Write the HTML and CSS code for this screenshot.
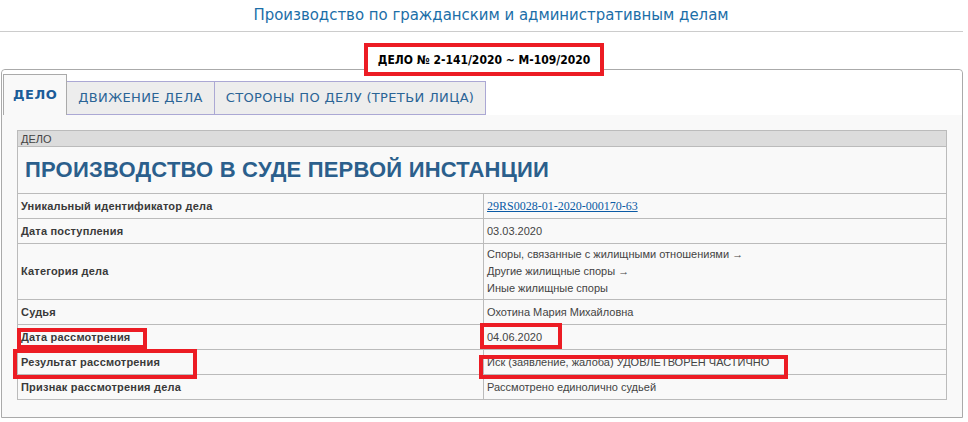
FILE: index.html
```html
<!DOCTYPE html>
<html>
<head>
    <meta charset="utf-8">
    <title>Дело № 2-141/2020</title>
    <link rel="stylesheet" href="styles.css">
</head>
<body>
    <h1 class="page-title">Производство по гражданским и административным делам</h1>
    <hr class="divider">

    <div class="case-number">
        <span class="case-number-box">ДЕЛО № 2-141/2020 ~ М-109/2020</span>
    </div>

    <div class="tabs-panel">
        <ul class="tabs">
            <li class="tab active">ДЕЛО</li>
            <li class="tab">ДВИЖЕНИЕ ДЕЛА</li>
            <li class="tab">СТОРОНЫ ПО ДЕЛУ (ТРЕТЬИ ЛИЦА)</li>
        </ul>

        <div class="tab-body">
            <table class="case-table">
                <tr class="section-row">
                    <td colspan="2">ДЕЛО</td>
                </tr>
                <tr class="heading-row">
                    <td colspan="2">ПРОИЗВОДСТВО В СУДЕ ПЕРВОЙ ИНСТАНЦИИ</td>
                </tr>
                <tr>
                    <td class="label">Уникальный идентификатор дела</td>
                    <td class="value"><a href="#" class="uid-link">29RS0028-01-2020-000170-63</a></td>
                </tr>
                <tr>
                    <td class="label">Дата поступления</td>
                    <td class="value">03.03.2020</td>
                </tr>
                <tr class="tall-row">
                    <td class="label">Категория дела</td>
                    <td class="value">
                        Споры, связанные с жилищными отношениями →<br>
                        Другие жилищные споры →<br>
                        Иные жилищные споры
                    </td>
                </tr>
                <tr>
                    <td class="label">Судья</td>
                    <td class="value">Охотина Мария Михайловна</td>
                </tr>
                <tr>
                    <td class="label"><span class="mark mark-date-label">Дата рассмотрения</span></td>
                    <td class="value"><span class="mark mark-date-value">04.06.2020</span></td>
                </tr>
                <tr>
                    <td class="label"><span class="mark mark-result-label">Результат рассмотрения</span></td>
                    <td class="value"><span class="mark mark-result-value">Иск (заявление, жалоба) УДОВЛЕТВОРЕН ЧАСТИЧНО</span></td>
                </tr>
                <tr>
                    <td class="label">Признак рассмотрения дела</td>
                    <td class="value">Рассмотрено единолично судьей</td>
                </tr>
            </table>
        </div>
    </div>
</body>
</html>
```

FILE: styles.css
```css
body {
    margin: 0;
    background: #fff;
    font-family: "Liberation Sans", Arial, sans-serif;
    color: #333;
}

.page-title {
    margin: 0;
    padding: 5px 0 0 14px;
    height: 26px;
    font-family: "DejaVu Sans Condensed", "Liberation Sans", sans-serif;
    font-size: 16.6px;
    font-weight: normal;
    color: #1b6ea8;
    text-align: center;
}

.divider {
    margin: 0 5px 0 0;
    border: none;
    border-top: 1px solid #ccc;
}

.case-number {
    padding-top: 11px;
    height: 26px;
    text-align: center;
}

.case-number-box {
    position: relative;
    z-index: 1;
    display: inline-block;
    padding: 5px 10px 4px;
    border: 4px solid #ec1c24;
    background: #fff;
    font-family: "DejaVu Sans Condensed", "Liberation Sans", sans-serif;
    font-size: 12px;
    font-weight: bold;
    color: #000;
    line-height: 16px;
}

.tabs-panel {
    margin: 0 5px 0 1px;
    padding: 2px 2px 17px;
    border: 1px solid #aaa;
    border-radius: 4px 4px 0 0;
    background: #f9f9f9;
}

.tabs {
    display: flex;
    align-items: flex-end;
    margin: -2px -2px 0;
    padding: 2px 0 0 1px;
    height: 43px;
    list-style: none;
    background: #fff;
    border-radius: 4px 4px 0 0;
}

.tab {
    height: 32px;
    padding: 0 11px;
    border: 1px solid #aba8d4;
    border-left: none;
    background: #ededed;
    color: #2a6496;
    font-family: "DejaVu Sans", Verdana, sans-serif;
    font-size: 13px;
    letter-spacing: 0.35px;
    line-height: 32px;
}

.tab.active {
    height: 40px;
    padding: 0 9px;
    border: 1px solid #aaa;
    border-bottom: none;
    background: #f9f9f9;
    color: #1c5d99;
    font-weight: bold;
    line-height: 40px;
    letter-spacing: 0.5px;
}

.tab-body {
    padding: 15px 13px 0 13px;
}

.case-table {
    width: 100%;
    border-collapse: collapse;
    font-family: "Liberation Sans", Arial, sans-serif;
    font-size: 11px;
}

.case-table td {
    border: 1px solid #bbb;
    padding: 0 3px;
    height: 24px;
    vertical-align: middle;
}

.section-row td {
    height: 15px;
    background: #dcdcdc;
    color: #444;
    font-size: 11px;
    line-height: 14px;
}

.heading-row td {
    height: 46px;
    padding-left: 7px;
    font-size: 22px;
    font-weight: bold;
    color: #2b5f8c;
    letter-spacing: 0.2px;
}

.label {
    width: 459px;
    font-weight: bold;
    color: #3a3a3a;
    letter-spacing: 0.2px;
}

.value {
    color: #444;
}

.tall-row td {
    height: 55px;
    line-height: 17px;
}

.uid-link {
    font-family: "Liberation Serif", "Times New Roman", serif;
    font-size: 12px;
    color: #0a5aa5;
}

.mark {
    position: relative;
}

.mark::after {
    content: "";
    position: absolute;
    border: 4px solid #ec1c24;
}

.mark-date-label::after {
    left: -4px;
    top: -3px;
    width: 122px;
    height: 13px;
}

.mark-result-label::after {
    left: -8px;
    top: -7px;
    width: 176px;
    height: 22px;
}

.mark-date-value::after {
    left: -7px;
    top: -8px;
    width: 74px;
    height: 18px;
}

.mark-result-value::after {
    left: -8px;
    top: -1px;
    width: 301px;
    height: 16px;
}
```
